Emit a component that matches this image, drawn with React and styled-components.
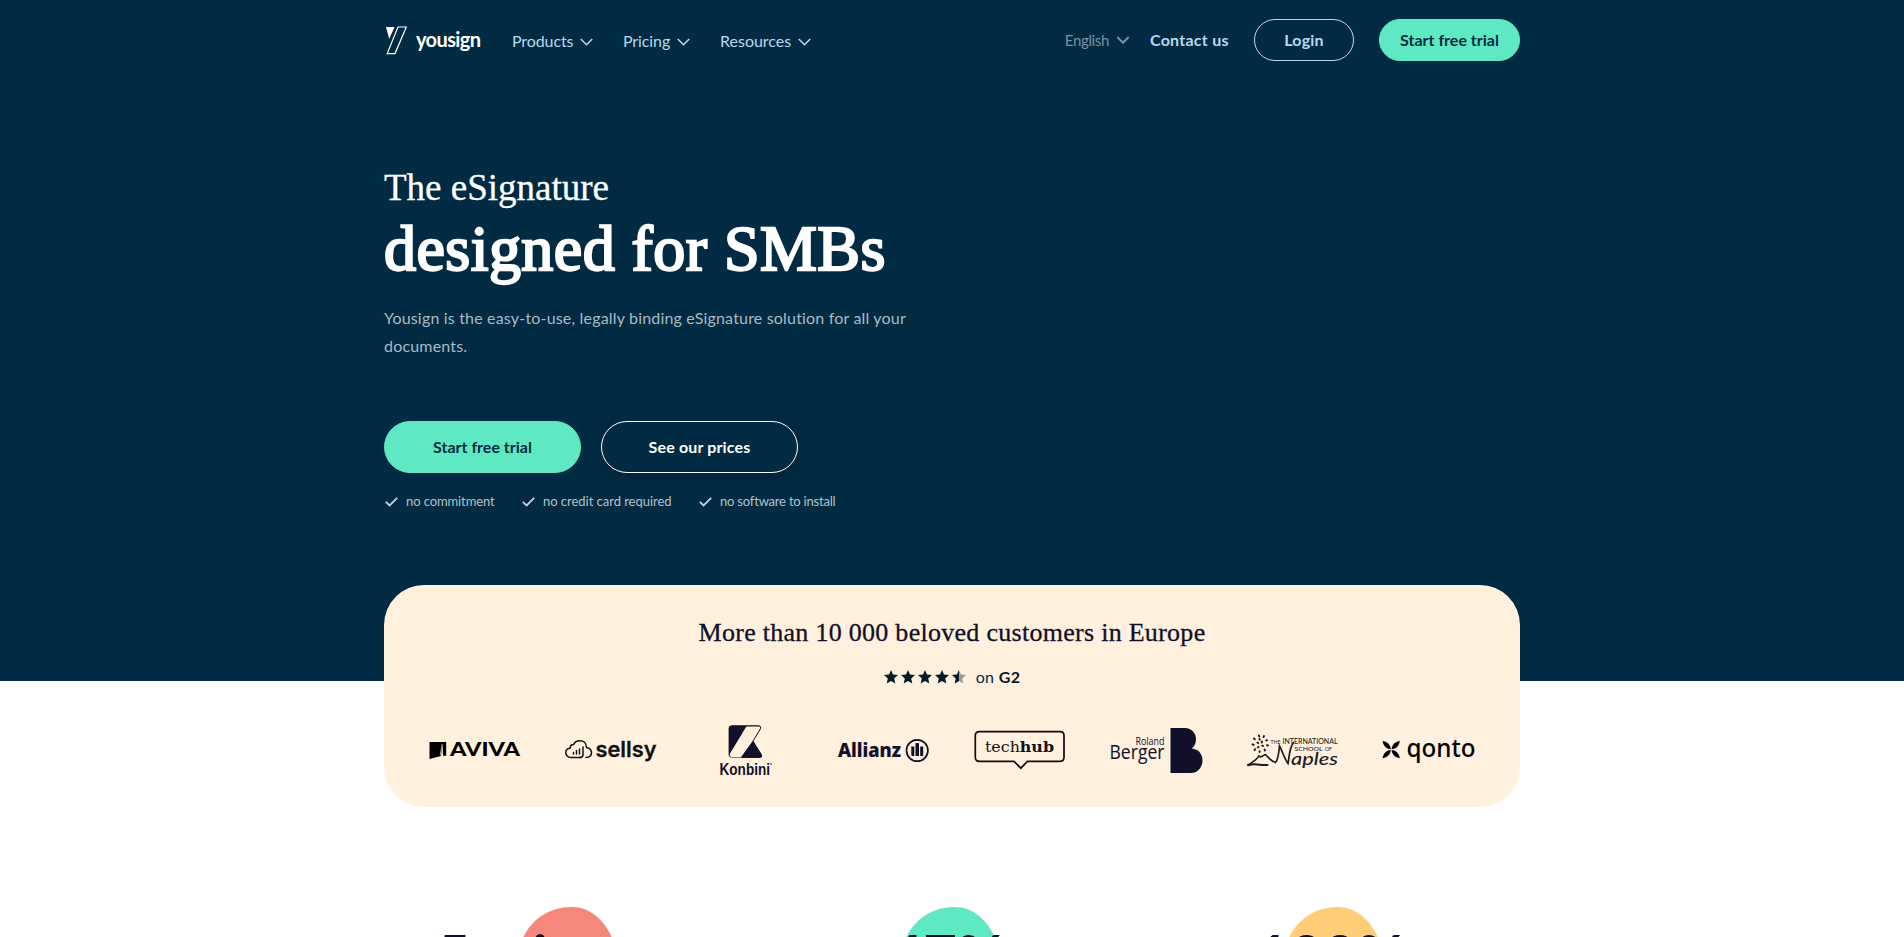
import React from "react";
import styled, { createGlobalStyle } from "styled-components";

const navy = "#002b43";
const ink = "#120f29";
const mint = "#5ee9c3";
const cream = "#fff1de";
const sans = 'Lato, "Liberation Sans", sans-serif';
const serif = '"Liberation Serif", serif';

const Global = createGlobalStyle`
  * { box-sizing: border-box; }
  body { margin: 0; background: #fff; font-family: ${sans}; overflow: hidden; }
  h1, h2, p, ul { margin: 0; padding: 0; font-weight: 400; }
`;

const Page = styled.div`
  height: 937px;
  overflow: hidden;
`;
const Hero = styled.div`
  height: 681px;
  background: ${navy};
`;
const Container = styled.div`
  width: 1136px;
  margin: 0 auto;
`;

/* header */
const Header = styled.header`
  display: flex;
  align-items: center;
  height: 80px;
`;
const Brand = styled.a`
  display: flex;
  align-items: center;
  width: 128px;
  padding-top: 1px;
  color: #fff;
`;
const BrandName = styled.span`
  margin: -3px 0 0 8px;
  font-size: 20px;
  font-weight: 700;
  line-height: 24px;
  letter-spacing: -0.62px;
`;
const NavItem = styled.a`
  display: flex;
  align-items: center;
  width: ${(p) => p.$width}px;
  color: #b7d9ee;
  font-size: 16px;
  letter-spacing: ${(p) => p.$spacing || 0}px;
`;
const Caret = styled.svg`
  margin: 4px 0 0 7px;
  fill: none;
  stroke: currentColor;
  stroke-width: ${(p) => p.$stroke || 1.6};
`;
const Actions = styled.div`
  display: flex;
  align-items: center;
  margin-left: auto;
`;
const Language = styled.span`
  display: flex;
  align-items: center;
  margin-right: 20px;
  color: #7a929f;
  font-size: 15px;
  font-weight: 400;
  letter-spacing: -0.35px;
  svg { margin-top: 0; }
`;
const Contact = styled.a`
  width: 104px;
  padding-bottom: 2px;
  color: #b7d9ee;
  font-size: 16px;
  font-weight: 700;
  letter-spacing: 0.25px;
`;
const Button = styled.a`
  display: flex;
  align-items: center;
  justify-content: center;
  width: ${(p) => p.$width}px;
  height: ${(p) => (p.$large ? 52 : 42)}px;
  padding-bottom: 2px;
  border-radius: 26px;
  border: 1px solid ${(p) => (p.$outline ? p.$outline : mint)};
  background: ${(p) => (p.$outline ? navy : mint)};
  color: ${(p) => (p.$outline ? p.$outline : navy)};
  box-shadow: ${(p) => (p.$shadow ? "0 4px 12px rgba(0, 10, 20, 0.25)" : "none")};
  font-size: 16px;
  font-weight: 700;
  letter-spacing: ${(p) => p.$spacing || 0}px;
`;
const TrialButton = styled(Button)`
  margin-left: 25px;
`;

/* intro */
const Intro = styled.section`
  padding-top: 87px;
  color: #fff;
`;
const Title = styled.h1`
  font-family: ${serif};
`;
const TitleLead = styled.span`
  display: block;
  font-size: 37px;
  line-height: 42px;
  -webkit-text-stroke: 0.3px #fff;
`;
const TitleMain = styled.span`
  display: block;
  margin-top: 4px;
  font-size: 64px;
  line-height: 71px;
  letter-spacing: 0.45px;
  -webkit-text-stroke: 2.3px #fff;
`;
const Lede = styled.p`
  width: 560px;
  margin-top: 20px;
  color: #a9bac4;
  font-size: 16px;
  line-height: 28px;
  letter-spacing: 0.18px;
`;
const ButtonRow = styled.div`
  display: flex;
  gap: 20px;
  margin-top: 61px;
`;
const Perks = styled.ul`
  display: flex;
  margin-top: 18px;
  list-style: none;
`;
const Perk = styled.li`
  display: flex;
  align-items: center;
  width: ${(p) => p.$width}px;
  height: 20px;
  color: #b3c1ca;
  font-size: 13px;
  letter-spacing: ${(p) => p.$spacing}px;
  svg { margin: 1px 8px 0 1px; }
`;

/* customers */
const Card = styled.section`
  width: 1136px;
  height: 222px;
  margin: -96px auto 0;
  padding: 33px 22.5px 0;
  border-radius: 40px;
  background: ${cream};
  position: relative;
`;
const CardTitle = styled.h2`
  color: ${ink};
  font-family: ${serif};
  font-size: 26px;
  line-height: 30px;
  letter-spacing: 0.28px;
  text-align: center;
  -webkit-text-stroke: 0.3px ${ink};
`;
const Rating = styled.p`
  display: flex;
  align-items: center;
  justify-content: center;
  height: 20px;
  margin-top: 18px;
  color: ${navy};
  font-size: 16px;
  svg { margin: 1px 9px 0 0; }
  span { margin-right: 5px; }
  b { color: #031b2b; letter-spacing: 0.2px; }
`;
const Logos = styled.div`
  display: grid;
  grid-template-columns: repeat(8, 1fr);
  justify-items: center;
  margin-top: 38px;
`;
const Logo = styled.svg`
  width: 92px;
  height: 52px;
  overflow: visible;
`;

/* figures */
const Figures = styled.section`
  display: grid;
  grid-template-columns: repeat(3, 1fr);
  width: 1150px;
  margin: 100px auto 0;
  position: relative;
`;
const Figure = styled.div`
  display: flex;
  justify-content: center;
  height: 100px;
  padding: 13px 10px 0 0;
  color: ${ink};
  font-size: 58px;
  font-weight: 700;
  line-height: 70px;
  position: relative;
`;
const Blob = styled.svg`
  position: absolute;
  top: 0;
  left: 50%;
  margin-left: -55px;
`;
const FigureText = styled.span`
  position: relative;
`;

const Chevron = ({ w = 13, stroke }) => (
  <Caret width={w} height="8" viewBox="0 0 13 8" $stroke={stroke}><path d="M.8 1 6.5 6.7 12.2 1" /></Caret>
);
const Check = () => (
  <svg width="13" height="10" viewBox="0 0 13 10" fill="none" stroke="#c5d0d7" strokeWidth="1.8"><path d="M.8 4.8 4.6 8.5 12.2.9" /></svg>
);
const starPath = "M7 0 9 4.6 14 5.1 10.2 8.5 11.3 13.6 7 11 2.7 13.6 3.8 8.5 0 5.1 5 4.6Z";

const Stars = () => (
  <svg width="83" height="14" viewBox="0 0 83 14" fill="#031b2b">
    {[0, 17, 34, 51].map((x) => <path key={x} transform={`translate(${x})`} d={starPath} />)}
    <path transform="translate(68)" d={starPath} fill="#9b9c98" />
    <path transform="translate(68)" d="M7 0V11L2.7 13.6 3.8 8.5 0 5.1 5 4.6Z" />
  </svg>
);

const Aviva = () => (
  <Logo viewBox="0 0 92 52">
    <path d="M.5 18H17.2V31.8H14L13.6 20 12 32 .5 35Z" />
    <path d="M13.2 20 11.2 31.5" stroke={cream} strokeWidth=".7" />
    <text x="21" y="32" fontFamily="Lato, sans-serif" fontWeight="900" fontSize="19" textLength="70" lengthAdjust="spacingAndGlyphs">AVIVA</text>
  </Logo>
);
const Sellsy = () => (
  <Logo viewBox="0 0 92 52">
    <g fill="none" stroke="#111" strokeWidth="1.5" strokeLinecap="round">
      <path d="M16 33.5H6C2.800 33.500.8 31.200.8 28.600S2.800 24.300 5.200 23.900C5.200 21.600 6.600 20.700 8.600 20.600 9.700 17.800 12.200 16.700 15 16.700 18.800 16.700 21.400 19.500 21.500 23.400 24.700 23.900 26.500 26 26.500 28.600 26.500 31.400 24.500 33.500 21 33.500" />
      <path d="M8.500 28.500V30M11.500 26.500V30M14.500 25V30M18 23V30.500C18 32.500 17 33.500 15 33.500" />
    </g>
    <text x="30.500" y="32.500" fill="#111" stroke="#111" strokeWidth=".3" fontFamily="Inter, sans-serif" fontWeight="600" fontSize="21.500" textLength="61" lengthAdjust="spacingAndGlyphs">sellsy</text>
  </Logo>
);
const Konbini = () => (
  <Logo viewBox="0 0 92 52" fill={ink}>
    <rect x="27.600" y="1.500" width="33" height="32" rx="3" />
    <path d="M45.500 2.200H57.500Q60.500 2.300 59.200 5L52 17.200 40.300 33H31Q27.600 32.800 29 29.500Z" fill={cream} />
    <path d="M59.600 1H62V33L52 17.200 59.800 4.800Q60.600 2.500 58 2Z" fill={cream} />
    <path d="M30 1.900H57.800Q60.600 2.200 59.400 4.800L52 17.200 60.500 31.200Q61 33.200 59 33.500H40.500L52 17.200" fill="none" stroke={ink} strokeWidth=".9" />
    <path d="M52 17.200 61 31Q61.500 33.600 59 33.600H40.300Z" />
    <text x="18.500" y="51" fontFamily="Liberation Sans, sans-serif" fontWeight="700" fontSize="16" textLength="50.500" lengthAdjust="spacingAndGlyphs">Konbini</text>
    <circle cx="70" cy="40" r=".8" />
  </Logo>
);
const Allianz = () => (
  <Logo viewBox="0 0 92 52" fill={ink}>
    <text x="0" y="33" fontFamily="Noto Sans, sans-serif" fontWeight="800" fontSize="19" textLength="63" lengthAdjust="spacingAndGlyphs" stroke={ink} strokeWidth=".2">Allianz</text>
    <circle cx="79.200" cy="26.500" r="10.700" fill="none" stroke={ink} strokeWidth="1.700" />
    <path d="M73.300 22.500H76.300V32H74.300Q73.300 32 73.300 31ZM77.500 19H81V32H77.500ZM82.200 22.500H85.200V31Q85.200 32 84.200 32H82.200Z" />
  </Logo>
);
const Techhub = () => (
  <Logo viewBox="0 0 92 52">
    <path d="M5.500 7.700H86Q90 7.700 90 11.700V33.300Q90 37.300 86 37.300H53.500L46.800 44.200 40 37.300H5.500Q1.300 37.300 1.300 33.300V11.700Q1.300 7.700 5.500 7.700Z" fill="none" stroke="#0b0b0b" strokeWidth="1.700" />
    <text x="11" y="28" fill="#111" fontFamily="DejaVu Serif, serif" fontSize="14.500" textLength="69" lengthAdjust="spacingAndGlyphs">tech<tspan fontWeight="700">hub</tspan></text>
  </Logo>
);
const RolandBerger = () => (
  <Logo viewBox="0 0 92 52" fill={ink}>
    <text x="24.500" y="20.800" fontFamily="Open Sans, sans-serif" fontSize="10.500" textLength="29" lengthAdjust="spacingAndGlyphs">Roland</text>
    <text x="-1.500" y="35" fontFamily="Open Sans, sans-serif" fontSize="20" textLength="55" lengthAdjust="spacingAndGlyphs">Berger</text>
    <path d="M59.500 4H74C80.500 4 85 9 85 15 85 19 83.500 22.500 80.800 24.600 87.500 25.200 91.500 30 91.500 36.500 91.500 43.500 86.500 49 80 49H59.500Z" />
  </Logo>
);
const Naples = () => (
  <Logo viewBox="0 0 92 52" fill="#1c1a1c">
    <g fill="none" stroke="#1c1a1c" strokeLinecap="round">
      <path d="M1 41C6 38 9 36.500 12 32 14 34.500 15.500 31.500 18.500 30.500 22 34 24 37 27.500 38" strokeWidth="1.600" />
      <path d="M1 41.200C8 39 13 41.500 20.500 41" strokeWidth="2" />
      <path d="M28.500 38.500C31.500 35 32 28 32.500 22 35.500 27 37 34 41 39.500 42.500 33 42 24 46.500 18.500" strokeWidth="1.700" />
      <path d="M7 14.500 7.800 15.300M12 11.500 12.300 12.500M17 12 16.500 13M20 16 19.200 16.500M21 21.500 20 21.200M18 26.500 17.500 25.500M12.500 28 12.700 27.200M7.500 26 8.300 25.200M5.500 20.500 6.700 20.700M10.500 18.500 11.200 19.200M15 17.500 14.700 18.500M16 22 15.200 21.700M11 23.500 11.500 23M12.500 15 12.700 15.700" strokeWidth="1.900" />
    </g>
    <text x="23.500" y="19.500" fontFamily="Lato, sans-serif" fontSize="5.500" textLength="10" lengthAdjust="spacingAndGlyphs">THE</text>
    <text x="35.500" y="19.500" fontFamily="Lato, sans-serif" fontWeight="500" fontSize="7.200" textLength="55" lengthAdjust="spacingAndGlyphs">INTERNATIONAL</text>
    <text x="47.500" y="26.500" fontFamily="Lato, sans-serif" fontWeight="500" fontSize="6" textLength="28" lengthAdjust="spacingAndGlyphs">SCHOOL</text>
    <text x="78" y="26.500" fontFamily="Lato, sans-serif" fontSize="5" textLength="7" lengthAdjust="spacingAndGlyphs">OF</text>
    <text x="44" y="40.500" fontFamily="Lato, sans-serif" fontStyle="italic" fontWeight="500" fontSize="17" textLength="47" lengthAdjust="spacingAndGlyphs">aples</text>
  </Logo>
);
const Qonto = () => (
  <Logo viewBox="0 0 92 52">
    <g transform="translate(8.200 25.700)">
      {[0, 90, 180, 270].map((a) => (
        <path key={a} transform={`rotate(${a})`} d="M-.4-.4C-5-.9-8-3.800-8.600-8.600-3.800-8-.9-5-.4-.4Z" />
      ))}
    </g>
    <text x="23.500" y="32.500" fontFamily="Noto Sans, sans-serif" fontWeight="500" fontSize="25" textLength="69" lengthAdjust="spacingAndGlyphs">qonto</text>
  </Logo>
);

const BlobShape = ({ color }) => (
  <Blob width="104" height="100" viewBox="0 0 104 100">
    <path fill={color} d="M3 60C3 24 26 0 58 0 84 0 103 28 103 56 103 84 84 100 56 100 24 100 3 86 3 60Z" />
  </Blob>
);

export default function App() {
  return (
    <Page>
      <Global />
      <Hero>
        <Container>
          <Header>
            <Brand>
              <svg width="24" height="30" viewBox="0 0 24 30">
                <path d="M2 1H10.500L5.200 13Z" fill="#fff" />
                <path d="M14 1H22.300L11 27.600H3.200Z" fill="none" stroke="#fff" strokeWidth="1.200" />
              </svg>
              <BrandName>yousign</BrandName>
            </Brand>
            <NavItem $width={111} $spacing={-0.1}>Products<Chevron /></NavItem>
            <NavItem $width={97} $spacing={-0.1}>Pricing<Chevron /></NavItem>
            <NavItem>Resources<Chevron /></NavItem>
            <Actions>
              <Language>English<Chevron w={14} stroke={2} /></Language>
              <Contact>Contact us</Contact>
              <Button $width={100} $outline="#b7d9ee" $spacing={0.2}>Login</Button>
              <TrialButton $width={141}>Start free trial</TrialButton>
            </Actions>
          </Header>
          <Intro>
            <Title>
              <TitleLead>The eSignature</TitleLead>
              <TitleMain>designed for SMBs</TitleMain>
            </Title>
            <Lede>Yousign is the easy-to-use, legally binding eSignature solution for all your documents.</Lede>
            <ButtonRow>
              <Button $large $width={197}>Start free trial</Button>
              <Button $large $width={197} $outline="#fff" $shadow $spacing={0.15}>See our prices</Button>
            </ButtonRow>
            <Perks>
              <Perk $width={137} $spacing={-0.1}><Check />no commitment</Perk>
              <Perk $width={177} $spacing={-0.03}><Check />no credit card required</Perk>
              <Perk $spacing={-0.2}><Check />no software to install</Perk>
            </Perks>
          </Intro>
        </Container>
      </Hero>
      <Card>
        <CardTitle>More than 10 000 beloved customers in Europe</CardTitle>
        <Rating><Stars /><span>on</span><b>G2</b></Rating>
        <Logos>
          <Aviva />
          <Sellsy />
          <Konbini />
          <Allianz />
          <Techhub />
          <RolandBerger />
          <Naples />
          <Qonto />
        </Logos>
      </Card>
      <Figures>
        <Figure><BlobShape color="#f5877b" /><FigureText>5 minutes</FigureText></Figure>
        <Figure><BlobShape color={mint} /><FigureText>47%</FigureText></Figure>
        <Figure><BlobShape color="#ffcc78" /><FigureText>100%</FigureText></Figure>
      </Figures>
    </Page>
  );
}
